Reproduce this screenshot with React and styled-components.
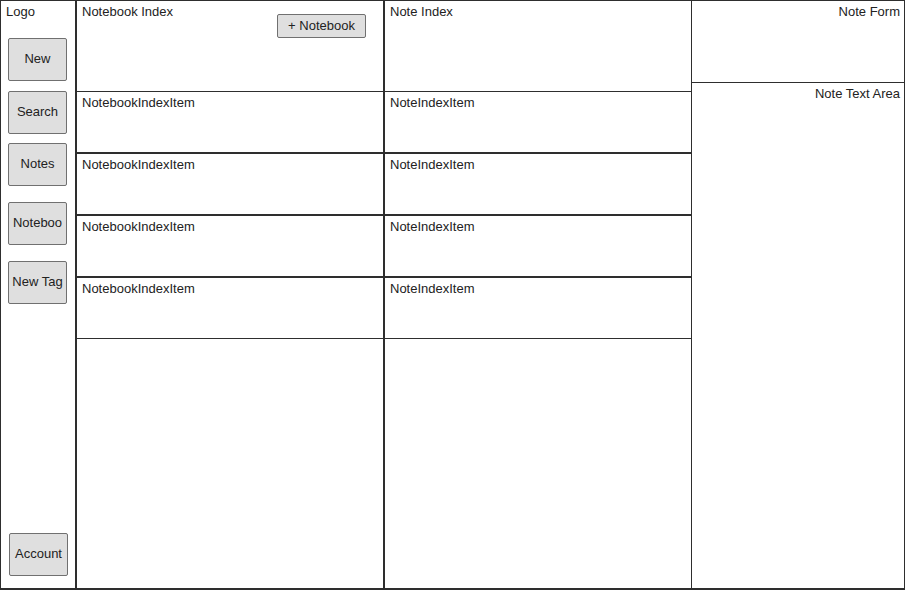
import React from 'react';
import styled, { createGlobalStyle } from 'styled-components';

const GlobalStyle = createGlobalStyle`
  html, body {
    margin: 0;
    padding: 0;
    background: #fff;
  }
  * {
    box-sizing: border-box;
  }
`;

const Frame = styled.div`
  display: flex;
  width: 905px;
  height: 590px;
  border: 1px solid #2e2e2e;
  border-bottom-width: 2px;
  font-family: 'Liberation Sans', Arial, sans-serif;
  font-size: 13px;
  line-height: 15px;
  color: #222;
  background: #fff;
`;

const Sidebar = styled.nav`
  display: flex;
  flex-direction: column;
  width: 76px;
  flex-shrink: 0;
  border-right: 2px solid #2e2e2e;
  padding-bottom: 12px;
`;

const Logo = styled.div`
  padding: 3px 5px;
`;

const NavButton = styled.button`
  width: 59px;
  height: 43px;
  margin-top: ${(p) => p.$top}px;
  margin-left: ${(p) => p.$left || 7}px;
  padding: 0 0 2px;
  background: #dfdfdf;
  border: 1px solid #707070;
  border-radius: 2px;
  font-family: inherit;
  font-size: 13px;
  color: #222;
  white-space: nowrap;
  overflow: hidden;
  &:last-child {
    margin-top: auto;
  }
`;

const Column = styled.section`
  display: flex;
  flex-direction: column;
  width: ${(p) => p.$width}px;
  flex-shrink: 0;
  border-right: ${(p) => p.$rule}px solid #2e2e2e;
`;

const IndexHeader = styled.div`
  display: flex;
  justify-content: space-between;
  align-items: flex-start;
  height: 90px;
  padding: 3px 17px 0 5px;
`;

const AddButton = styled.button`
  width: 89px;
  height: 24px;
  margin-top: 10px;
  padding: 0 0 1px;
  background: #dfdfdf;
  border: 1px solid #707070;
  border-radius: 2px;
  font-family: inherit;
  font-size: 13px;
  color: #222;
`;

const IndexItem = styled.div`
  height: 62px;
  padding: 3px 5px;
  border-top: 1px solid #2e2e2e;
  border-bottom: 1px solid #2e2e2e;
`;

const DetailColumn = styled.section`
  display: flex;
  flex-direction: column;
  flex: 1;
`;

const FormPane = styled.div`
  height: 82px;
  padding: 3px 4px 0;
  text-align: right;
  border-bottom: 1px solid #2e2e2e;
`;

const TextPane = styled.div`
  flex: 1;
  padding: 3px 4px 0;
  text-align: right;
`;

const navItems = [
  { label: 'New', top: 16 },
  { label: 'Search', top: 10 },
  { label: 'Notes', top: 9 },
  { label: 'Noteboo', top: 16 },
  { label: 'New Tag', top: 16 },
];

const App = () => {
  const items = [1, 2, 3, 4];
  return (
    <>
      <GlobalStyle />
      <Frame>
        <Sidebar>
          <Logo>Logo</Logo>
          {navItems.map((item) => (
            <NavButton key={item.label} $top={item.top}>
              {item.label}
            </NavButton>
          ))}
          <NavButton $left={8}>Account</NavButton>
        </Sidebar>
        <Column $width={308} $rule={2}>
          <IndexHeader>
            <span>Notebook Index</span>
            <AddButton>+ Notebook</AddButton>
          </IndexHeader>
          {items.map((i) => (
            <IndexItem key={i}>NotebookIndexItem</IndexItem>
          ))}
        </Column>
        <Column $width={307} $rule={1}>
          <IndexHeader>
            <span>Note Index</span>
          </IndexHeader>
          {items.map((i) => (
            <IndexItem key={i}>NoteIndexItem</IndexItem>
          ))}
        </Column>
        <DetailColumn>
          <FormPane>Note Form</FormPane>
          <TextPane>Note Text Area</TextPane>
        </DetailColumn>
      </Frame>
    </>
  );
};

export default App;
